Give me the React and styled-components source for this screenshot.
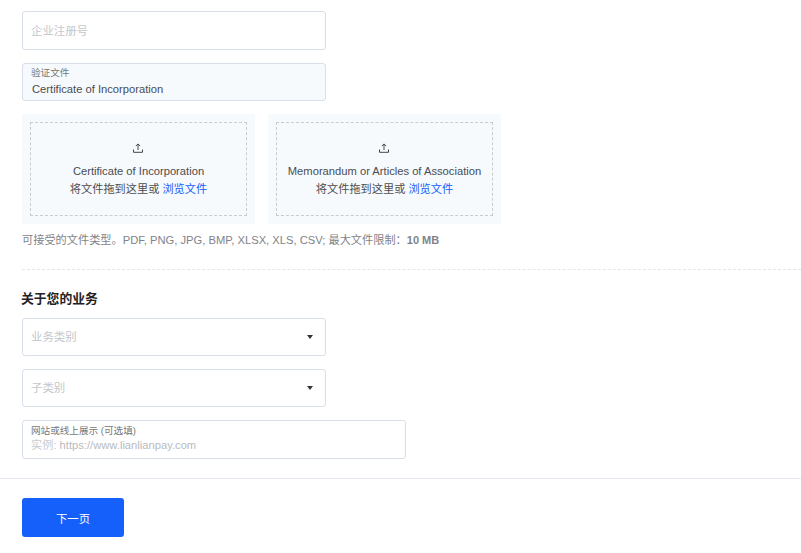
import React from "react";
import styled, { createGlobalStyle } from "styled-components";

const Global = createGlobalStyle`
  html, body { margin: 0; padding: 0; background: #fff; }
  body { font-family: "Liberation Sans", Arial, "Noto Sans CJK SC", sans-serif; font-size: 12px; color: #333; }
  * { box-sizing: border-box; }
`;

const Page = styled.div`
  position: relative;
  width: 801px;
  height: 553px;
  overflow: hidden;
  background: #fff;
`;

const Form = styled.div`
  display: flex;
  flex-direction: column;
  padding: 11px 0 0 22px;
`;

const Field = styled.div`
  width: ${(p) => p.$width || 304}px;
  height: ${(p) => p.$height || 38}px;
  margin-bottom: ${(p) => p.$gap ?? 13}px;
  flex: none;
  display: flex;
  align-items: center;
  justify-content: space-between;
  padding: 0 12px 0 8px;
  border: 1px solid #d8dfea;
  border-radius: 3px;
  background: ${(p) => (p.$filled ? "#f6fafd" : "#fff")};
`;

const Placeholder = styled.span`
  font-size: 11.4px;
  margin-top: -2px;
  color: #c4c7cc;
`;

const Stacked = styled.div`
  display: flex;
  flex-direction: column;
  justify-content: center;
  line-height: 15px;
  margin-top: -2px;
`;

const FloatLabel = styled.span`
  font-size: 9.6px;
  line-height: 14px;
  color: #777;
`;

const Value = styled.span`
  font-size: 11.2px;
  line-height: 16px;
  padding-left: 1px;
  margin-top: 1px;
  color: #4a4d52;
`;

const HintValue = styled.span`
  font-size: 11.2px;
  line-height: 16px;
  margin-top: -1px;
  color: #b9bbbe;
`;

const HintPrefix = styled.span`
  color: #c9cbce;
`;

const Uploads = styled.div`
  display: flex;
  gap: 13px;
`;

const UploadCard = styled.div`
  width: 233px;
  height: 110px;
  padding: 8px;
  background: #f6fafd;
`;

const Dropzone = styled.div`
  height: 94px;
  border: 1px dashed #c8ccd1;
  display: flex;
  flex-direction: column;
  align-items: center;
  padding-top: 19px;
  color: #4a4d52;
  font-size: 11.2px;
`;

const UploadTitle = styled.div`
  margin-top: 8px;
  line-height: 18px;
  white-space: nowrap;
`;

const UploadHint = styled.div`
  line-height: 18px;
  white-space: nowrap;
`;

const BrowseLink = styled.span`
  color: #1560fa;
`;

const HelpText = styled.div`
  margin-top: 8px;
  line-height: 16px;
  font-size: 11.2px;
  color: #7f8389;
`;

const Strong = styled.span`
  font-weight: 700;
  font-size: 11px;
`;

const DashedRule = styled.div`
  margin-top: 21px;
  border-top: 1px dashed #e3e7ec;
`;

const Heading = styled.h3`
  margin: 20px 0 10px -1px;
  font-size: 12.8px;
  line-height: 18px;
  font-weight: 700;
  color: #222;
`;

const Caret = styled.span`
  width: 0;
  height: 0;
  border-left: 3px solid transparent;
  border-right: 3px solid transparent;
  border-top: 4px solid #333;
`;

const Footer = styled.div`
  margin-top: 19px;
  border-top: 1px solid #e3e7ee;
  padding: 19px 0 0 22px;
`;

const NextButton = styled.button`
  width: 102px;
  height: 39px;
  border: none;
  border-radius: 3px;
  background: #1560fa;
  color: #fff;
  font-family: inherit;
  font-size: 11.4px;
`;

const Watermarks = styled.div`
  position: absolute;
  inset: 0;
  pointer-events: none;
`;

const Mark = styled.span`
  position: absolute;
  width: 240px;
  margin-left: -120px;
  margin-top: -11px;
  line-height: 22px;
  text-align: center;
  font-size: 18px;
  white-space: nowrap;
  color: rgba(0, 0, 0, 0.013);
  transform: rotate(-22deg);
`;

const UploadIcon = () => (
  <svg width="12" height="12" viewBox="0 0 12 12" fill="none" stroke="#44474c" strokeWidth="1" style={{ marginLeft: -1 }}>
    <path d="M6 8V2M3.8 4.1 6 1.9l2.2 2.2" />
    <path d="M1.5 7.5v2.8h9V7.5" />
  </svg>
);

const Upload = ({ title }) => (
  <UploadCard>
    <Dropzone>
      <UploadIcon />
      <UploadTitle>{title}</UploadTitle>
      <UploadHint>
        将文件拖到这里或 <BrowseLink>浏览文件</BrowseLink>
      </UploadHint>
    </Dropzone>
  </UploadCard>
);

const marks = [];
for (let row = 0; row < 6; row++) {
  for (let col = -2; col < 4; col++) {
    const x = 83 + 34 * row + 294 * col;
    const y = 51 + 94 * row;
    if (x > -70 && x < 870) marks.push({ x, y, key: `${row}-${col}` });
  }
}

export default function App() {
  return (
    <Page>
      <Global />
      <Form>
        <Field $height={39}>
          <Placeholder>企业注册号</Placeholder>
        </Field>
        <Field $filled>
          <Stacked>
            <FloatLabel>验证文件</FloatLabel>
            <Value>Certificate of Incorporation</Value>
          </Stacked>
        </Field>
        <Uploads>
          <Upload title="Certificate of Incorporation" />
          <Upload title="Memorandum or Articles of Association" />
        </Uploads>
        <HelpText>
          可接受的文件类型。PDF, PNG, JPG, BMP, XLSX, XLS, CSV; 最大文件限制：<Strong>10 MB</Strong>
        </HelpText>
        <DashedRule />
        <Heading>关于您的业务</Heading>
        <Field>
          <Placeholder>业务类别</Placeholder>
          <Caret />
        </Field>
        <Field>
          <Placeholder>子类别</Placeholder>
          <Caret />
        </Field>
        <Field $width={384} $height={39} $gap={0}>
          <Stacked>
            <FloatLabel>网站或线上展示 (可选填)</FloatLabel>
            <HintValue>
              <HintPrefix>实例: </HintPrefix>https://www.lianlianpay.com
            </HintValue>
          </Stacked>
        </Field>
      </Form>
      <Footer>
        <NextButton>下一页</NextButton>
      </Footer>
      <Watermarks>
        {marks.map((m) => (
          <Mark key={m.key} style={{ left: m.x, top: m.y }}>
            2024/03/26 10:14-liujj004
          </Mark>
        ))}
      </Watermarks>
    </Page>
  );
}
